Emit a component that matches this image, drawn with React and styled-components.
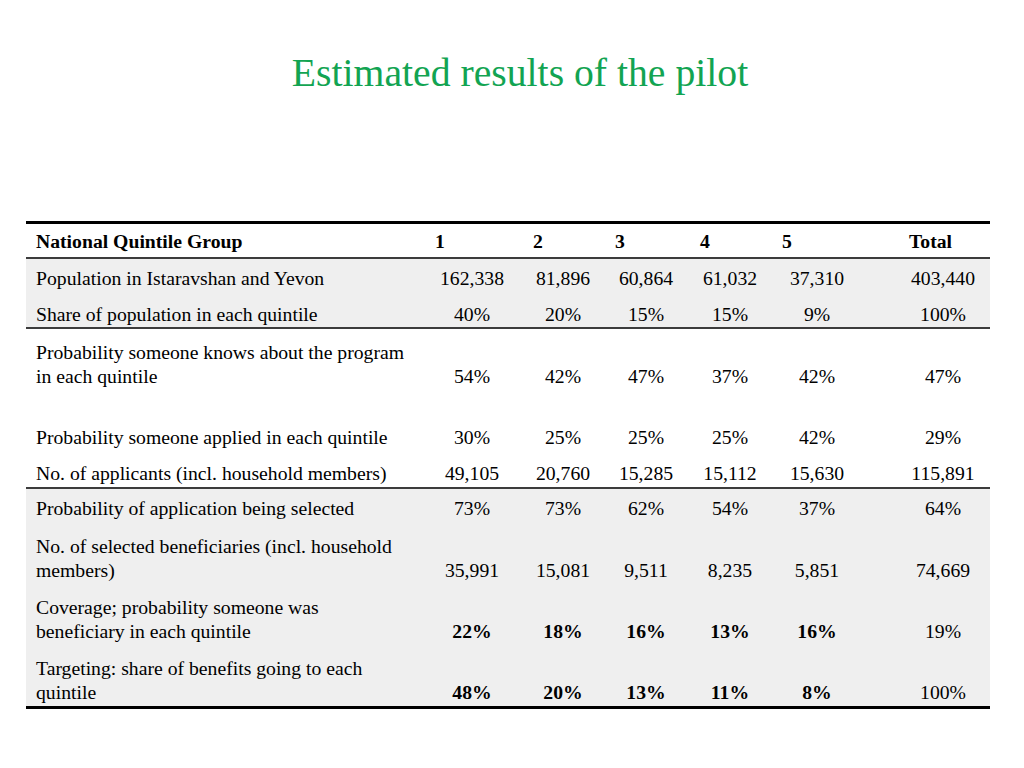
import React from 'react';
import styled, { createGlobalStyle } from 'styled-components';

const GlobalStyle = createGlobalStyle`
  html, body {
    margin: 0;
    padding: 0;
    background: #fff;
  }

  body {
    font-family: "Liberation Serif", "Times New Roman", serif;
    color: #000;
  }
`;

const Slide = styled.div`
  width: 1024px;
  height: 768px;
  overflow: hidden;
  background: #fff;
`;

const Title = styled.h1`
  margin: 0 0 0 16px;
  padding-top: 50px;
  font-weight: normal;
  font-size: 39.7px;
  line-height: 46px;
  color: #12a452;
  text-align: center;
`;

const Table = styled.table`
  margin: 125px 0 0 26px;
  width: 964px;
  table-layout: fixed;
  border-collapse: collapse;
  font-size: 19.7px;
  line-height: 24px;
  border-top: 3px solid #000;
  border-bottom: 3px solid #000;
`;

const Section = styled.tbody`
  background: ${(p) => (p.$shaded ? '#efefef' : '#fff')};
  border-bottom: ${(p) => (p.$last ? 'none' : '2px solid #3c3c3c')};
`;

const Head = styled.thead`
  border-bottom: 2px solid #3c3c3c;
`;

const HeadCell = styled.th`
  padding: 5px 0 4px ${(p) => p.$indent}px;
  text-align: left;
  font-weight: bold;
  vertical-align: bottom;
`;

const Label = styled.td`
  padding: ${(p) => p.$pt}px 10px ${(p) => p.$pb}px 10px;
  vertical-align: top;
`;

const Value = styled.td`
  padding: ${(p) => p.$pt}px 0 ${(p) => p.$pb}px ${(p) => (p.$total ? 39 : 0)}px;
  text-align: center;
  vertical-align: bottom;
  font-weight: ${(p) => (p.$bold ? 'bold' : 'normal')};
`;

const widths = [401, 90, 92, 74, 94, 80, 133];

const header = [
  { text: 'National Quintile Group', indent: 10 },
  { text: '1', indent: 8 },
  { text: '2', indent: 16 },
  { text: '3', indent: 6 },
  { text: '4', indent: 17 },
  { text: '5', indent: 5 },
  { text: 'Total', indent: 52 },
];

const sections = [
  {
    shaded: true,
    rows: [
      { label: ['Population in Istaravshan and Yevon'], pt: 7, pb: 6, values: ['162,338', '81,896', '60,864', '61,032', '37,310', '403,440'] },
      { label: ['Share of population in each quintile'], pt: 6, pb: 1, values: ['40%', '20%', '15%', '15%', '9%', '100%'] },
    ],
  },
  {
    shaded: false,
    rows: [
      { label: ['Probability someone knows about the program', 'in each quintile'], pt: 11, pb: 31, values: ['54%', '42%', '47%', '37%', '42%', '47%'] },
      { label: ['Probability someone applied in each quintile'], pt: 6, pb: 6, values: ['30%', '25%', '25%', '25%', '42%', '29%'] },
      { label: ['No. of applicants (incl. household members)'], pt: 6, pb: 2, values: ['49,105', '20,760', '15,285', '15,112', '15,630', '115,891'] },
    ],
  },
  {
    shaded: true,
    last: true,
    rows: [
      { label: ['Probability of application being selected'], pt: 7, pb: 6, values: ['73%', '73%', '62%', '54%', '37%', '64%'] },
      { label: ['No. of selected beneficiaries (incl. household', 'members)'], pt: 8, pb: 6, values: ['35,991', '15,081', '9,511', '8,235', '5,851', '74,669'] },
      { label: ['Coverage; probability someone was', 'beneficiary in each quintile'], pt: 7, pb: 6, bold: true, values: ['22%', '18%', '16%', '13%', '16%', '19%'] },
      { label: ['Targeting: share of benefits going to each', 'quintile'], pt: 7, pb: 2, bold: true, values: ['48%', '20%', '13%', '11%', '8%', '100%'] },
    ],
  },
];

const App = () => {
  return (
    <Slide>
      <GlobalStyle />
      <Title>Estimated results of the pilot</Title>

      <Table>
        <colgroup>
          {widths.map((w, i) => (
            <col key={i} style={{ width: w }} />
          ))}
        </colgroup>

        <Head>
          <tr>
            {header.map((h) => (
              <HeadCell key={h.text} $indent={h.indent}>{h.text}</HeadCell>
            ))}
          </tr>
        </Head>

        {sections.map((section, s) => (
          <Section key={s} $shaded={section.shaded} $last={section.last}>
            {section.rows.map((row, r) => (
              <tr key={r}>
                <Label $pt={row.pt} $pb={row.pb}>
                  {row.label.map((line, l) => (
                    <React.Fragment key={l}>
                      {l > 0 && <br />}
                      {line}
                    </React.Fragment>
                  ))}
                </Label>
                {row.values.map((v, i) => (
                  <Value
                    key={i}
                    $pt={row.pt}
                    $pb={row.pb}
                    $total={i === 5}
                    $bold={row.bold && i < 5}
                  >
                    {v}
                  </Value>
                ))}
              </tr>
            ))}
          </Section>
        ))}
      </Table>
    </Slide>
  );
};

export default App;
